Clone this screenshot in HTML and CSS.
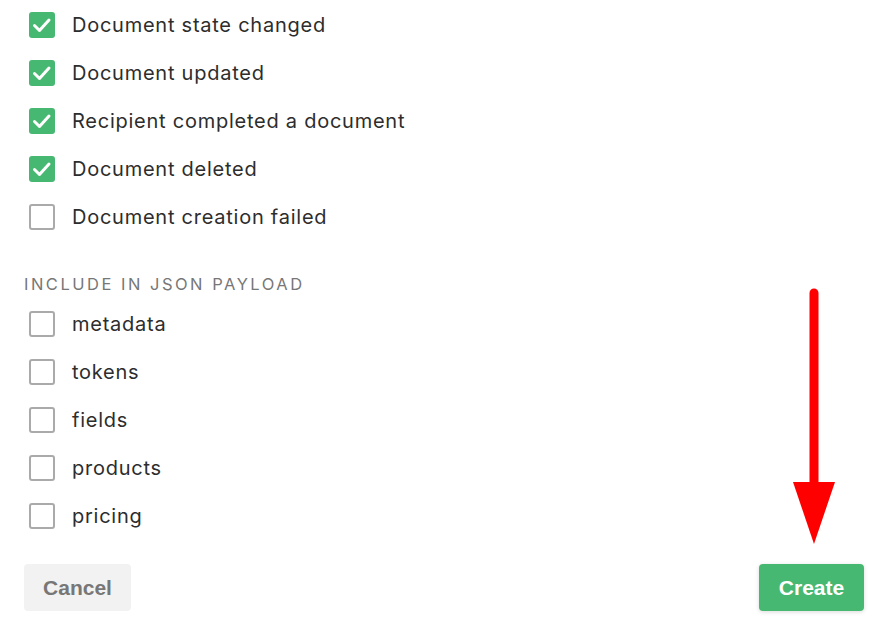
FILE: index.html
```html
<!DOCTYPE html>
<html>
<head>
<meta charset="utf-8">
<link rel="stylesheet" href="styles.css">
</head>
<body>
<div class="page">
  <div class="group">
    <label class="row"><span class="box checked"><svg viewBox="0 0 26 26"><path d="M5.5 13.5 L10.5 18.5 L20 8" fill="none" stroke="#fff" stroke-width="3" stroke-linecap="round" stroke-linejoin="round"/></svg></span><span class="label">Document state changed</span></label>
    <label class="row"><span class="box checked"><svg viewBox="0 0 26 26"><path d="M5.5 13.5 L10.5 18.5 L20 8" fill="none" stroke="#fff" stroke-width="3" stroke-linecap="round" stroke-linejoin="round"/></svg></span><span class="label">Document updated</span></label>
    <label class="row"><span class="box checked"><svg viewBox="0 0 26 26"><path d="M5.5 13.5 L10.5 18.5 L20 8" fill="none" stroke="#fff" stroke-width="3" stroke-linecap="round" stroke-linejoin="round"/></svg></span><span class="label">Recipient completed a document</span></label>
    <label class="row"><span class="box checked"><svg viewBox="0 0 26 26"><path d="M5.5 13.5 L10.5 18.5 L20 8" fill="none" stroke="#fff" stroke-width="3" stroke-linecap="round" stroke-linejoin="round"/></svg></span><span class="label">Document deleted</span></label>
    <label class="row"><span class="box"></span><span class="label">Document creation failed</span></label>
  </div>
  <div class="heading">INCLUDE IN JSON PAYLOAD</div>
  <div class="group">
    <label class="row"><span class="box"></span><span class="label">metadata</span></label>
    <label class="row"><span class="box"></span><span class="label">tokens</span></label>
    <label class="row"><span class="box"></span><span class="label">fields</span></label>
    <label class="row"><span class="box"></span><span class="label">products</span></label>
    <label class="row"><span class="box"></span><span class="label">pricing</span></label>
  </div>
  <div class="actions">
    <button class="btn cancel">Cancel</button>
    <div class="create-wrap">
      <svg class="arrow" viewBox="0 0 44 260" width="44" height="260"><line x1="21" y1="5" x2="21" y2="200" stroke="#ff0000" stroke-width="9" stroke-linecap="round"/><polygon points="0,194 42,194 21,256" fill="#ff0000"/></svg>
      <button class="btn create">Create</button>
    </div>
  </div>
</div>
</body>
</html>
```
FILE: styles.css
```css
html, body { margin: 0; padding: 0; background: #fff; }
body { width: 873px; height: 630px; overflow: hidden; font-family: Inter, "Open Sans", sans-serif; }
.page { padding: 0 9px 0 24px; }
.group { display: flex; flex-direction: column; }
.row { display: flex; align-items: center; height: 48px; padding-left: 5px; }
.row:first-child { margin-top: 1px; }
.box { width: 26px; height: 26px; box-sizing: border-box; border: 2px solid #aaaaaa; border-radius: 3px; margin-right: 17px; display: flex; }
.box.checked { background: #47b872; border: 0; }
.box svg { width: 26px; height: 26px; }
.label { font-size: 20px; color: #2d2d2d; letter-spacing: 0.75px; }
.heading { margin-top: 33px; height: 25px; font-size: 16.5px; letter-spacing: 2.5px; color: #777; line-height: 20px; }
.actions { display: flex; justify-content: space-between; align-items: flex-end; margin-top: 24px; }
.btn { font-family: "Liberation Sans", Arial, sans-serif; font-weight: bold; font-size: 21px; border: 0; border-radius: 4px; height: 47px; padding: 0; }
.cancel { width: 107px; background: #f2f2f2; color: #777; }
.create-wrap { display: flex; flex-direction: column; align-items: center; position: relative; }
.arrow { position: absolute; bottom: 63px; left: 34px; }
.create { width: 105px; background: #47b872; color: #fff; box-shadow: 0 1px 4px rgba(0,0,0,0.15); }
```
